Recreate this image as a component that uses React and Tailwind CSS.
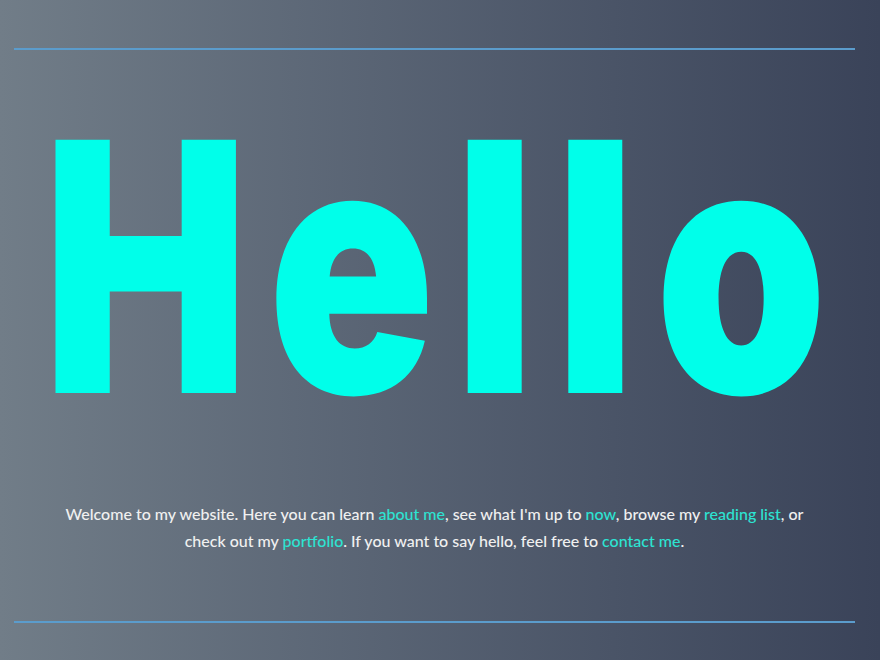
export default function App() {
  return (
    <div className="min-h-screen w-full bg-gradient-to-r from-[#717d88] to-[#3a4359]">
      <div className="w-[869px] px-[14px] pt-12">
        <hr className="border-0 h-[2px] bg-[#5b9ccc]" />

        {/* Big greeting */}
        <div className="mt-[67px] h-[300px] flex justify-center">
          <h1
            className="inline-block pl-[0.07em] leading-[300px] text-[348px] font-black text-[#00ffea] tracking-[0.07em] scale-x-[0.79] origin-center whitespace-nowrap"
            style={{ fontFamily: 'Inter, "Liberation Sans", sans-serif' }}
          >
            Hello
          </h1>
        </div>

        <p
          className="mt-[83px] px-[40px] text-center text-[16px] leading-[27px] font-medium text-[#f0f0f0]"
          style={{ fontFamily: 'Lato, "Open Sans", sans-serif' }}
        >
          Welcome to my website. Here you can learn <a className="text-[#2de3d2]">about me</a>, see what I'm up to{' '}
          <a className="text-[#2de3d2]">now</a>, browse my <a className="text-[#2de3d2]">reading list</a>, or check out my{' '}
          <a className="text-[#2de3d2]">portfolio</a>. If you want to say hello, feel free to{' '}
          <a className="text-[#2de3d2]">contact me</a>.
        </p>

        <hr className="mt-[67px] border-0 h-[2px] bg-[#5b9ccc]" />
      </div>
    </div>
  )
}
